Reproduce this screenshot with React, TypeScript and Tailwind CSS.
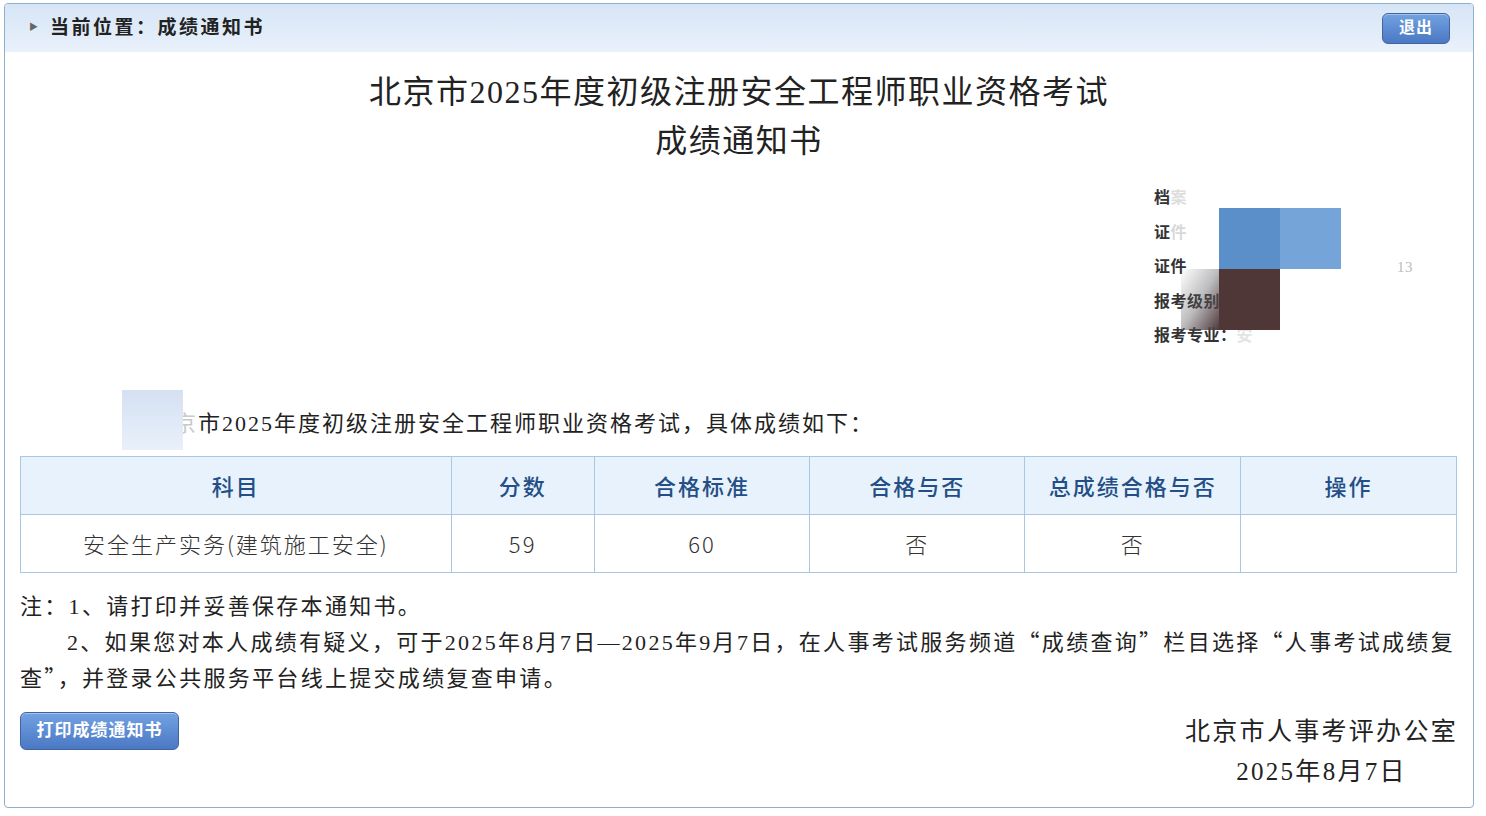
import React from "react";

const serif = { fontFamily: '"Liberation Serif", "Noto Sans CJK SC", serif' };
const cjk = { fontFamily: '"Noto Sans CJK SC", sans-serif' };

const columns = [
  { title: "科目", width: "w-[431px]" },
  { title: "分数", width: "w-[143px]" },
  { title: "合格标准", width: "w-[216px]" },
  { title: "合格与否", width: "w-[215px]" },
  { title: "总成绩合格与否", width: "w-[216px]" },
  { title: "操作", width: "w-[216px]" },
];

const row = ["安全生产实务(建筑施工安全)", "59", "60", "否", "否", ""];

// full-width quote marks (Liberation Serif draws them narrow)
function Q({ children }: { children: React.ReactNode }) {
  return (
    <span className="leading-none" style={cjk}>
      {children}
    </span>
  );
}

function BlueButton({ children, className }: { children: React.ReactNode; className?: string }) {
  return (
    <button
      className={`rounded-[6px] border border-[#3f64a0] bg-gradient-to-b from-[#73a2e2] to-[#4a78c3] font-bold text-white shadow-[inset_0_1px_0_rgba(255,255,255,0.35)] ${className ?? ""}`}
    >
      {children}
    </button>
  );
}

export default function App() {
  return (
    <div className="h-[816px] w-full bg-white pl-[4px] pt-[3px]" style={serif}>
      <div className="h-[805px] w-[1470px] overflow-hidden rounded-[4px] border border-[#8fb0c6] bg-white">
        {/* Header */}
        <div className="flex h-[48px] items-center justify-between bg-gradient-to-b from-[#d6e5f6] to-[#e9f1fb] pl-[24px] pr-[23px]">
          <div className="flex items-center">
            <span className="mr-[12px] text-[9px] text-[#666]">▶</span>
            <span className="text-[19px] font-bold tracking-[2.5px] text-[#222]">当前位置：成绩通知书</span>
          </div>
          <BlueButton className="h-[31px] w-[68px] text-[16px] tracking-[1px]">退出</BlueButton>
        </div>

        <div className="px-[15px]">
          {/* Title */}
          <div className="mt-[16px] text-center text-[32px] leading-[49px] tracking-[1.5px] text-[#222]">
            <div>北京市2025年度初级注册安全工程师职业资格考试</div>
            <div>成绩通知书</div>
          </div>

          {/* Candidate info (redacted) */}
          <div className="mt-[15px] flex justify-end">
            <div className="relative w-[304px] text-[16px] font-bold leading-[34.5px] tracking-[0.5px] text-[#333]">
              <div>
                档<span className="text-[#ddd]">案</span>
              </div>
              <div>
                证<span className="text-[#d8d8d8]">件</span>
              </div>
              <div>证件</div>
              <div>报考级别</div>
              <div>
                报考专业：<span className="text-[#e4e4e4]">安</span>
              </div>
              <span className="absolute left-[243px] top-[69px] text-[15px] font-normal leading-[34.5px] text-[#bbb]">13</span>
              <div className="absolute left-[27px] top-[88px] h-[61px] w-[38px] bg-gradient-to-br from-transparent via-[#5a5a60]/40 to-[#4f3a3c]" />
              <div className="absolute left-[65px] top-[27px] h-[61px] w-[61px] bg-[#5b8fca]" />
              <div className="absolute left-[126px] top-[27px] h-[61px] w-[61px] bg-[#75a4d9]" />
              <div className="absolute left-[65px] top-[88px] h-[61px] w-[61px] bg-[#4f3737]" />
            </div>
          </div>

          {/* Intro sentence */}
          <div className="relative mt-[52px] pl-[130px] text-[22px] leading-[36px] tracking-[2px] text-[#222]">
            <span className="text-[#c9c9c9]">北京</span>市2025年度初级注册安全工程师职业资格考试，具体成绩如下：
            <div className="absolute left-[102px] top-[-16px] h-[60px] w-[61px] bg-gradient-to-b from-[#d4e1f3] to-[#e9f0fa]" />
          </div>

          {/* Score table */}
          <table className="mt-[14px] w-[1437px] border-collapse">
            <thead>
              <tr className="bg-[#e8f2fc]">
                {columns.map((c) => (
                  <th
                    key={c.title}
                    className={`${c.width} h-[58px] border border-[#a9c7e3] text-center text-[22px] tracking-[2px] text-[#234f86]`}
                    style={{ ...cjk, fontWeight: 500 }}
                  >
                    {c.title}
                  </th>
                ))}
              </tr>
            </thead>
            <tbody>
              <tr>
                {row.map((v, i) => (
                  <td
                    key={i}
                    className="h-[58px] border border-[#a9c7e3] text-center text-[22px] tracking-[2px] text-[#333]"
                    style={{ ...cjk, fontWeight: 300 }}
                  >
                    {v}
                  </td>
                ))}
              </tr>
            </tbody>
          </table>

          {/* Notes */}
          <div className="mt-[16px] whitespace-nowrap text-[22px] leading-[36px] tracking-[2.3px] text-[#222]">
            <div className="h-[36px]">注：1、请打印并妥善保存本通知书。</div>
            <div className="h-[36px] pl-[47px]">
              2、如果您对本人成绩有疑义，可于2025年8月7日—2025年9月7日，在人事考试服务频道<Q>“</Q>成绩查询<Q>”</Q>栏目选择<Q>“</Q>人事考试成绩复
            </div>
            <div className="h-[36px]">
              查<Q>”</Q>，并登录公共服务平台线上提交成绩复查申请。
            </div>
          </div>

          {/* Print + signature */}
          <div className="mt-[15px] flex items-start justify-between">
            <BlueButton className="h-[38px] w-[159px] text-[17px] tracking-[1px]">打印成绩通知书</BlueButton>
            <div className="text-center text-[25px] leading-[40px] tracking-[2.3px] text-[#222]">
              <div>北京市人事考评办公室</div>
              <div>2025年8月7日</div>
            </div>
          </div>
        </div>
      </div>
    </div>
  );
}
